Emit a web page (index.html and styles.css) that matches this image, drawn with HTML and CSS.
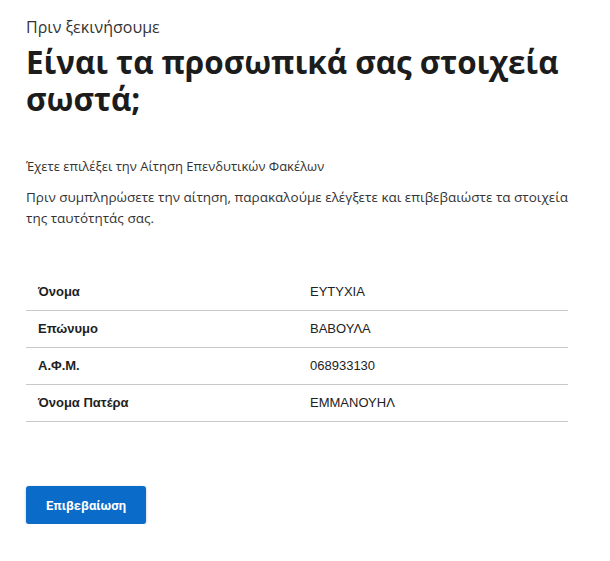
FILE: index.html
```html
<!DOCTYPE html>
<html lang="el">
<head>
<meta charset="utf-8">
<title>Πριν ξεκινήσουμε</title>
<link rel="stylesheet" href="styles.css">
</head>
<body>
<main class="page">
  <p class="caption">Πριν ξεκινήσουμε</p>
  <h1 class="title">Είναι τα προσωπικά σας στοιχεία σωστά;</h1>
  <p class="lead">Έχετε επιλέξει την Αίτηση Επενδυτικών Φακέλων</p>
  <p class="body">Πριν συμπληρώσετε την αίτηση, παρακαλούμε ελέγξετε και επιβεβαιώστε τα στοιχεία της ταυτότητάς σας.</p>
  <table class="details">
    <tbody>
      <tr><th>Όνομα</th><td>ΕΥΤΥΧΙΑ</td></tr>
      <tr><th>Επώνυμο</th><td>ΒΑΒΟΥΛΑ</td></tr>
      <tr><th>Α.Φ.Μ.</th><td>068933130</td></tr>
      <tr><th>Όνομα Πατέρα</th><td>ΕΜΜΑΝΟΥΗΛ</td></tr>
    </tbody>
  </table>
  <div class="actions">
    <button class="btn" type="button">Επιβεβαίωση</button>
  </div>
</main>
</body>
</html>
```

FILE: styles.css
```css
html, body {
  margin: 0;
  padding: 0;
  background: #fff;
}
body {
  font-family: "Open Sans", "Noto Sans", sans-serif;
  color: #1f1f1f;
}
.page {
  padding: 16px 20px 0 26px;
  display: flex;
  flex-direction: column;
  align-items: flex-start;
}
.caption {
  margin: 0;
  font-size: 16px;
  line-height: 22px;
  color: #333;
}
.title {
  margin: 5px 0 0;
  font-size: 31.4px;
  line-height: 37px;
  font-weight: 700;
  color: #1c1c1c;
}
.lead {
  margin: 39px 0 0;
  font-size: 13px;
  line-height: 21px;
  color: #333;
}
.body {
  margin: 10px 0 0;
  font-size: 13.5px;
  line-height: 21px;
  color: #333;
  max-width: 550px;
}
.details {
  margin-top: 45px;
  width: 542px;
  border-collapse: collapse;
  font-family: "Liberation Sans", Arial, sans-serif;
  font-size: 13px;
  line-height: 16px;
  color: #222;
}
.details th,
.details td {
  padding: 10px 12px;
  border-bottom: 1px solid #c9c9c9;
  text-align: left;
  vertical-align: top;
}
.details th {
  width: 248px;
  font-weight: 700;
  color: #1f1f1f;
}
.details td {
  font-weight: 400;
}
.actions {
  margin-top: 64px;
}
.btn {
  width: 120px;
  height: 38px;
  border: 0;
  border-radius: 3px;
  background: #0b6bc9;
  color: #fff;
  font-family: "Roboto", "Liberation Sans", sans-serif;
  font-weight: 700;
  font-size: 13px;
  box-shadow: 0 1px 3px rgba(0, 0, 0, 0.25);
  cursor: pointer;
}
```
